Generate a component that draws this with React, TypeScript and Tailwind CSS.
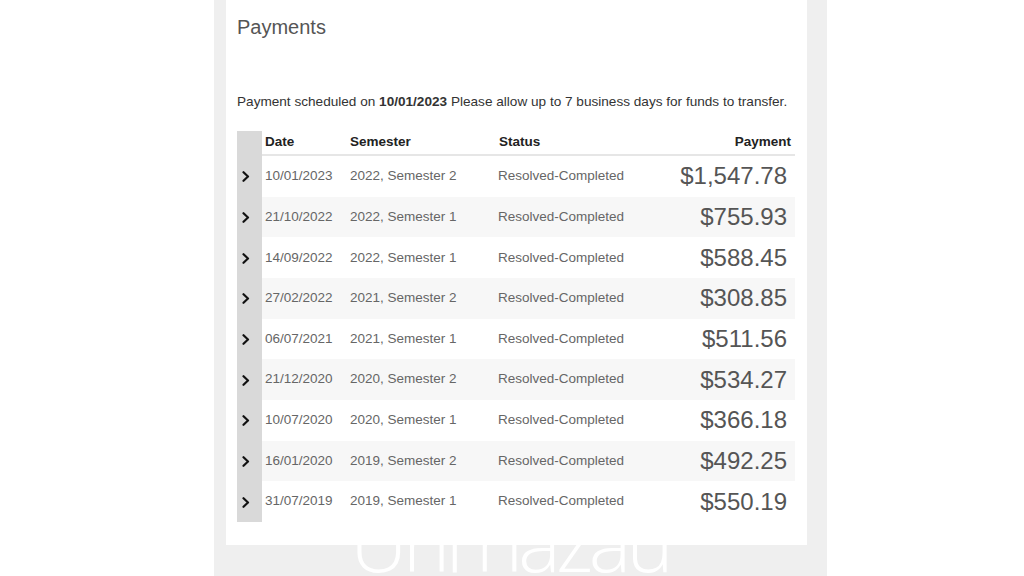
type Payment = { date: string; semester: string; status: string; amount: string };

const payments: Payment[] = [
  { date: '10/01/2023', semester: '2022, Semester 2', status: 'Resolved-Completed', amount: '$1,547.78' },
  { date: '21/10/2022', semester: '2022, Semester 1', status: 'Resolved-Completed', amount: '$755.93' },
  { date: '14/09/2022', semester: '2022, Semester 1', status: 'Resolved-Completed', amount: '$588.45' },
  { date: '27/02/2022', semester: '2021, Semester 2', status: 'Resolved-Completed', amount: '$308.85' },
  { date: '06/07/2021', semester: '2021, Semester 1', status: 'Resolved-Completed', amount: '$511.56' },
  { date: '21/12/2020', semester: '2020, Semester 2', status: 'Resolved-Completed', amount: '$534.27' },
  { date: '10/07/2020', semester: '2020, Semester 1', status: 'Resolved-Completed', amount: '$366.18' },
  { date: '16/01/2020', semester: '2019, Semester 2', status: 'Resolved-Completed', amount: '$492.25' },
  { date: '31/07/2019', semester: '2019, Semester 1', status: 'Resolved-Completed', amount: '$550.19' },
];

function Chevron() {
  return (
    <svg width="8" height="11" viewBox="0 0 8 11" fill="none">
      <path d="M1.5 1.2 L6 5.5 L1.5 9.8" stroke="#111" strokeWidth="2.2" strokeLinecap="round" strokeLinejoin="round" />
    </svg>
  );
}

export default function App() {
  return (
    <div className="w-[1024px] h-[576px] bg-white flex overflow-hidden" style={{ fontFamily: '"Liberation Sans", Arial, sans-serif' }}>
      <div className="relative ml-[214px] w-[613px] h-full bg-[#efefef] pl-3 pr-5">
        <div className="h-[545px] bg-white pl-[11px] pr-3">
          <h1 className="pt-[15px] text-[20px] leading-6 text-[#555]">Payments</h1>
          <p className="mt-[55px] text-[13.6px] leading-4 text-[#333]">
            Payment scheduled on <span className="font-semibold">10/01/2023</span> Please allow up to 7 business days for funds to transfer.
          </p>

          <div className="mt-[21px] flex">
            <div className="w-[25px] bg-[#d9d9d9] flex flex-col pt-[25px]">
              {payments.map((p) => (
                <div key={p.date} className="h-[40.67px] flex items-center pl-[5px] pt-[1px]">
                  <Chevron />
                </div>
              ))}
            </div>
            <div className="flex-1">
              <div className="h-[25px] flex items-center border-b-2 border-[#e6e6e6] text-[13.5px] font-bold text-[#222]">
                <div className="w-[88px] pl-[3px]">Date</div>
                <div className="w-[148px]">Semester</div>
                <div className="w-[150px] pl-[1px]">Status</div>
                <div className="flex-1 text-right pr-[4px]">Payment</div>
              </div>
              {payments.map((p, i) => (
                <div key={p.date} className={`h-[40.67px] flex items-center text-[13.5px] text-[#666] ${i % 2 === 1 ? 'bg-[#f7f7f7]' : 'bg-white'}`}>
                  <div className="w-[88px] pl-[3px]">{p.date}</div>
                  <div className="w-[148px]">{p.semester}</div>
                  <div className="w-[150px]">{p.status}</div>
                  <div className="flex-1 text-right pr-[8px] text-[24px] text-[#555]">{p.amount}</div>
                </div>
              ))}
            </div>
          </div>
        </div>

        {/* watermark, only its lower part shows below the card */}
        <div className="absolute left-0 right-0 top-[545px] bottom-0 overflow-hidden">
          <div className="ml-[136px] mt-[-44px] text-[80px] leading-none tracking-[-4.5px] text-white whitespace-nowrap" style={{ fontFamily: '"Open Sans", sans-serif', fontWeight: 300 }}>
            Uni hazau
          </div>
        </div>
      </div>
    </div>
  );
}
